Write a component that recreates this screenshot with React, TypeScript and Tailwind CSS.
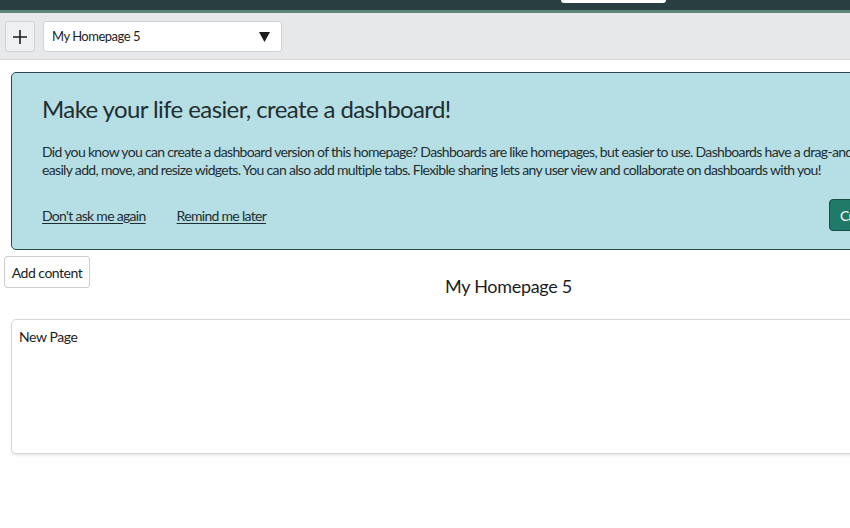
import React from "react";

export default function App() {
  return (
    <div className="w-[850px] h-[528px] overflow-hidden bg-white text-[#1d1d1d]" style={{ fontFamily: "Lato, 'Open Sans', sans-serif" }}>
      <div className="w-[1017px]">
        {/* top header */}
        <div className="relative h-[10px] bg-[#293e40]">
          <div className="absolute left-[561px] top-0 h-[3px] w-[105px] rounded-b-[3px] bg-white" />
        </div>
        <div className="h-[3px] bg-[#5c8776]" />
        {/* toolbar */}
        <div className="flex h-[47px] items-center gap-2 border-b border-[#d3d5d7] bg-[#e7e8ea] px-[5px] pt-[1px]">
          <button className="flex h-[31px] w-[30px] items-center justify-center rounded-[3px] border border-[#cfd2d5] bg-[#eef0f2] text-[#1d1d1d]">
            <svg width="14" height="14" viewBox="0 0 14 14"><path d="M7 0v14M0 7h14" stroke="#1d1d1d" strokeWidth="1.6" /></svg>
          </button>
          <div className="flex h-[31px] w-[239px] items-center justify-between rounded-[3px] border border-[#cfd2d5] bg-white pl-[8px] pr-[11px] text-[13px] tracking-[-0.5px]">
            <span>My Homepage 5</span>
            <svg width="11" height="10" viewBox="0 0 11 10"><path d="M0 0h11L5.5 10z" fill="#1d1d1d" /></svg>
          </div>
        </div>
        {/* banner */}
        <div className="ml-[11px] mt-[12px] h-[178px] w-[1000px] rounded-[5px] border border-[#2b4a50] bg-[#b6dee5] pl-[30px] pt-[20px] text-[#1f2e30]">
          <h2 className="text-[24px] leading-[32px] tracking-[-0.6px]">Make your life easier, create a dashboard!</h2>
          <p className="mt-[18px] text-[14px] leading-[18px] tracking-[-0.67px] whitespace-nowrap">
            Did you know you can create a dashboard version of this homepage? Dashboards are like homepages, but easier to use. Dashboards have a drag-and-drop interface that lets you
            <br />
            easily add, move, and resize widgets. You can also add multiple tabs. Flexible sharing lets any user view and collaborate on dashboards with you!
          </p>
          <div className="mt-[20px] flex items-center text-[14px] tracking-[-0.7px]">
            <a className="underline underline-offset-2">Don't ask me again</a>
            <a className="ml-[31px] underline underline-offset-2">Remind me later</a>
            <button className="ml-auto mr-[51px] h-[32px] w-[130px] rounded-[4px] border border-[#1a4d45] bg-[#207a68] text-left pl-[10px] text-white">Create dashboard</button>
          </div>
        </div>
        {/* add content + title */}
        <div className="relative mt-[6px] h-[58px]">
          <button className="ml-[4px] h-[32px] w-[86px] rounded-[3px] border border-[#cdcdcd] bg-white text-[14px] tracking-[-0.5px]">Add content</button>
          <div className="absolute left-0 right-0 top-[18px] text-center text-[18px] leading-[24px] tracking-[-0.3px]">My Homepage 5</div>
        </div>
        {/* card */}
        <div className="ml-[11px] mt-[5px] h-[135px] w-[1000px] rounded-[5px] border border-[#d6d6d6] bg-white px-[7px] pt-[8px] shadow-[0_2px_2px_rgba(0,0,0,0.08)]">
          <div className="text-[14px] leading-[18px] tracking-[-0.4px]">New Page</div>
        </div>
      </div>
    </div>
  );
}
